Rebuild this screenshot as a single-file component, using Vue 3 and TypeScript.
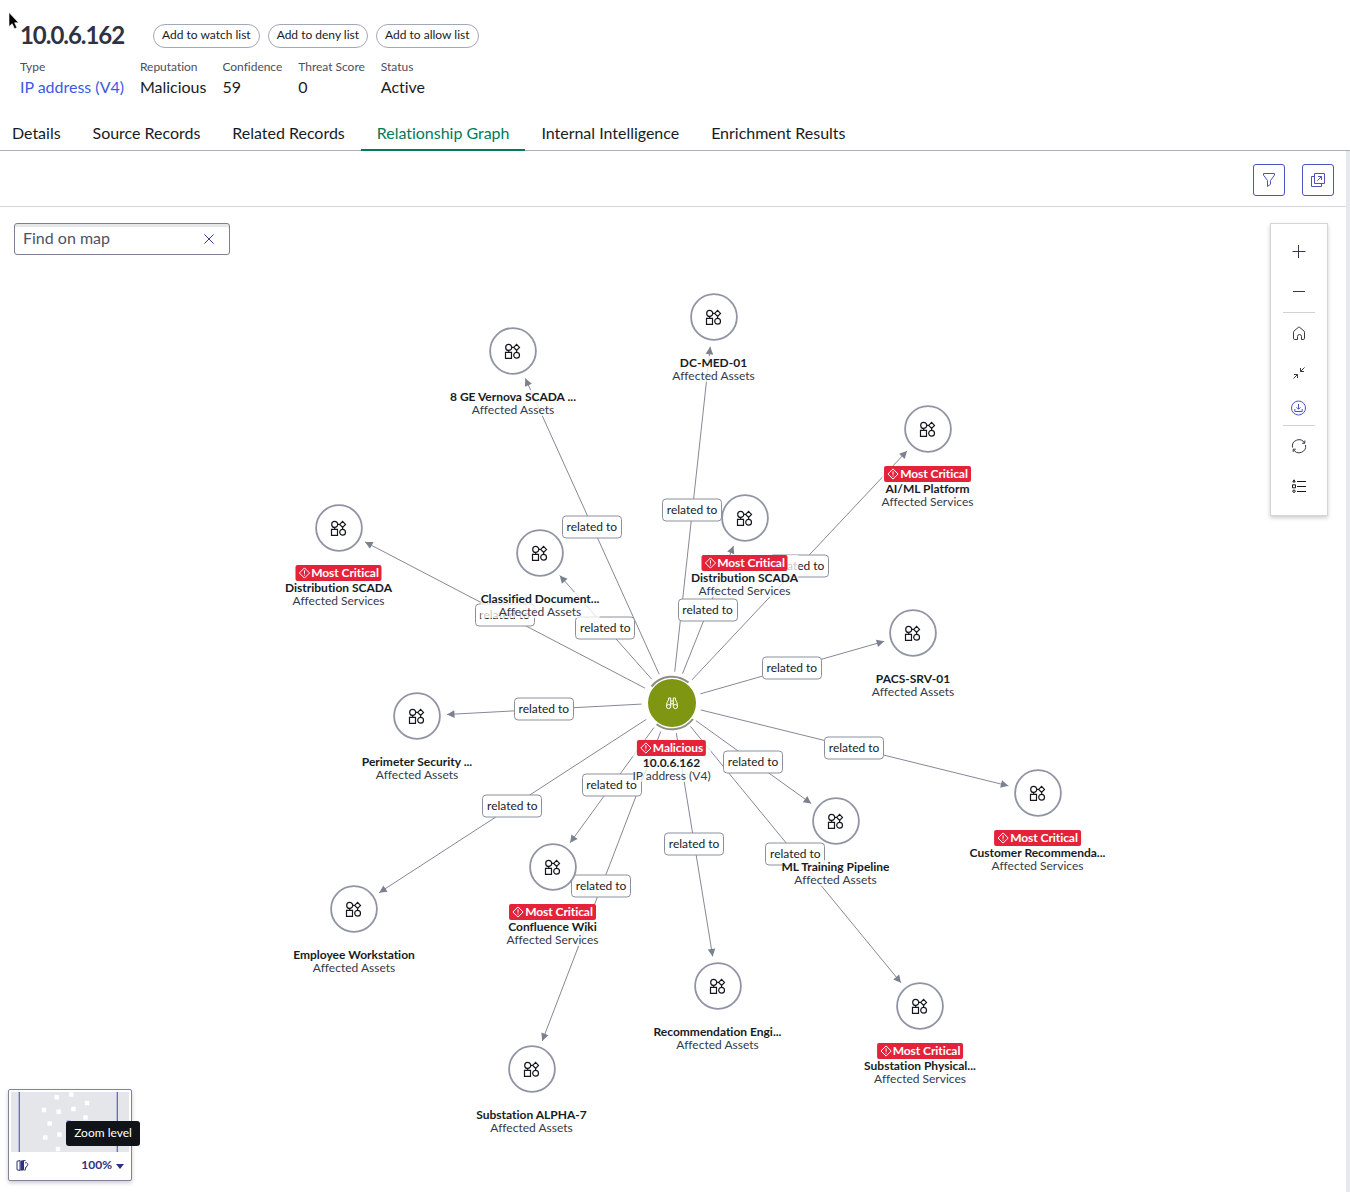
<template>
  <div class="page">
    <header class="record-header">
      <div class="title-row">
        <h1>10.0.6.162</h1>
        <button v-for="action in actions" :key="action" class="pill">{{ action }}</button>
      </div>
      <dl class="meta">
        <div v-for="field in fields" :key="field.label" class="field">
          <dt>{{ field.label }}</dt>
          <dd :class="{ link: field.link }">{{ field.value }}</dd>
        </div>
      </dl>
      <svg class="cursor" width="14" height="20" viewBox="0 0 14 20">
        <path d="M2 1.500v14l3.200-2.800 2.300 5 2.400-1-2.300-4.900h4z" fill="#000" stroke="#fff" stroke-width=".6" />
      </svg>
    </header>

    <nav class="tabs">
      <button
        v-for="tab in tabs"
        :key="tab"
        class="tab"
        :class="{ active: tab === activeTab }"
        @click="activeTab = tab"
      >{{ tab }}</button>
    </nav>

    <main class="panel">
      <div class="toolbar">
        <button class="icon-button">
          <svg width="16" height="16" viewBox="0 0 16 16">
            <path d="M2.500 1.500h11v1.600L9.500 8.500v3.700l-3 2.300v-6L2.500 3.100z" />
          </svg>
        </button>
        <button class="icon-button">
          <svg width="16" height="16" viewBox="0 0 16 16">
            <path d="M4.500 1.500h10v10h-10zM4.500 4.500h-3v10h10v-3M7.300 8.700l4-4M8 4.500h3.500V8" />
          </svg>
        </button>
      </div>

      <div class="canvas">
        <svg class="edges" width="1346" height="985" viewBox="0 207 1346 985">
          <g v-for="edge in edges" :key="edge.id">
            <line :x1="edge.x1" :y1="edge.y1" :x2="edge.x2" :y2="edge.y2" />
            <path d="M0 0l-7.500-3.800v7.600z" :transform="edge.arrow" />
          </g>
        </svg>
        <span
          v-for="edge in edges"
          :key="edge.id"
          class="edge-label"
          :style="{ left: edge.mx + 'px', top: edge.my - 207 + 'px' }"
        >related to</span>

        <div
          v-for="(node, i) in nodes"
          :key="i"
          class="node"
          :class="{ tagged: node.badge }"
          :style="{ left: node.x + 'px', top: node.y - 207 + 'px' }"
        >
          <svg v-if="node.root" class="ring" width="60" height="60" viewBox="-30 -30 60 60">
            <circle r="24" fill="#7f9612" />
            <path class="arc" d="M-20.500-16.500A26.300 26.300 0 0 1 16.500-20.500M-15.500 21.200A26.300 26.300 0 0 0 21 16" />
            <path
              class="glyph"
              d="M-1.300 3.300v-8.300h-2.200v2c-1.200 1.500-2 3.500-2 6.300M1.300 3.300v-8.300h2.200v2c1.200 1.500 2 3.500 2 6.300M-1.300-2h2.600M-1.300 .8h2.600"
            />
            <circle class="glyph" cx="-3.400" cy="3.500" r="2.100" />
            <circle class="glyph" cx="3.400" cy="3.500" r="2.100" />
          </svg>
          <svg v-else class="ring" width="60" height="60" viewBox="-30 -30 60 60">
            <circle r="22.900" fill="#fff" stroke="#9094a3" stroke-width="1.800" />
            <g class="asset" transform="translate(-.7 0)">
              <circle cx="-3.600" cy="-3.600" r="3" />
              <path d="M-.6-3.600h2M4.300-6.600l2.900 3-2.900 3-2.900-3zM-3.600-.6v2M-6.800 1.300h6v6h-6z" />
              <circle cx="4.300" cy="4.300" r="2.900" />
              <path d="M4.300-.6v2" />
            </g>
          </svg>
          <div class="caption">
            <span v-if="node.badge" class="badge">
              <svg width="12" height="12" viewBox="0 0 12 12">
                <path d="M6 .9L11.100 6 6 11.100.9 6zM6 3.300v3.400M6 7.600v1" />
              </svg>
              <span>{{ node.badge }}</span>
            </span>
            <strong>{{ node.name }}</strong>
            <span class="kind">{{ node.kind }}</span>
          </div>
        </div>

        <div class="search">
          <span>Find on map</span>
          <svg width="10" height="10" viewBox="0 0 10 10"><path d="M.4.4l9.200 9.200M9.600.4L.4 9.600" /></svg>
        </div>

        <aside class="controls">
          <svg v-for="tool in tools" :key="tool.name" :class="tool.name" width="16" height="16" viewBox="0 0 16 16">
            <path :d="tool.path" />
          </svg>
        </aside>

        <div class="minimap">
          <svg width="118" height="60" viewBox="11 1092 118 60">
            <rect x="11" y="1092" width="118" height="60" fill="#e5e6ea" />
            <rect v-for="(dot, i) in dots" :key="i" :x="dot[0] - 2.2" :y="dot[1] - 2.2" width="4.400" height="4.400" fill="#fff" />
            <rect x="66.500" y="1120" width="4" height="4" fill="#b7b3ee" />
            <path d="M18.500 1092v60M116.500 1092v60" stroke="#b9bbdf" />
            <path d="M19.500 1092v60M117.500 1092v60" stroke="#6d6abf" />
          </svg>
          <div class="minimap-bar">
            <svg width="13" height="11" viewBox="0 0 13 11">
              <path d="M1 1.200l3-.6v9.800l-3-.6zM8 .6h1.500M8 10.200l1.500-.4V7.500M9 3a1.800 1.800 0 1 1 2 3L9.500 8" fill="none" stroke="#30317e" />
              <path d="M4.500.7L8 0v10.200l-3.500.6z" fill="#30317e" />
            </svg>
            <span class="percent">100%</span>
            <i class="caret"></i>
          </div>
          <span class="tooltip">Zoom level</span>
        </div>
      </div>
    </main>
  </div>
</template>

<script setup lang="ts">
  import { computed, ref } from 'vue';

  interface GraphNode {
    x: number;
    y: number;
    name: string;
    kind: string;
    badge?: string;
    root?: boolean;
  }

  const actions = ['Add to watch list', 'Add to deny list', 'Add to allow list'];

  const fields = [
    { label: 'Type', value: 'IP address (V4)', link: true },
    { label: 'Reputation', value: 'Malicious' },
    { label: 'Confidence', value: '59' },
    { label: 'Threat Score', value: '0' },
    { label: 'Status', value: 'Active' }
  ];

  const tabs = [
    'Details',
    'Source Records',
    'Related Records',
    'Relationship Graph',
    'Internal Intelligence',
    'Enrichment Results'
  ];
  const activeTab = ref('Relationship Graph');

  const assets = 'Affected Assets';
  const services = 'Affected Services';
  const critical = 'Most Critical';

  const root: GraphNode = { x: 671.5, y: 703, name: '10.0.6.162', kind: 'IP address (V4)', badge: 'Malicious', root: true };

  const related: GraphNode[] = [
    { x: 513, y: 351, name: '8 GE Vernova SCADA ...', kind: assets },
    { x: 713.5, y: 317, name: 'DC-MED-01', kind: assets },
    { x: 927.5, y: 429, name: 'AI/ML Platform', kind: services, badge: critical },
    { x: 338.5, y: 528, name: 'Distribution SCADA', kind: services, badge: critical },
    { x: 540, y: 553, name: 'Classified Document...', kind: assets },
    { x: 744.5, y: 518, name: 'Distribution SCADA', kind: services, badge: critical },
    { x: 913, y: 633, name: 'PACS-SRV-01', kind: assets },
    { x: 417, y: 716, name: 'Perimeter Security ...', kind: assets },
    { x: 1037.5, y: 793, name: 'Customer Recommenda...', kind: services, badge: critical },
    { x: 835.5, y: 821, name: 'ML Training Pipeline', kind: assets },
    { x: 552.5, y: 867, name: 'Confluence Wiki', kind: services, badge: critical },
    { x: 354, y: 909, name: 'Employee Workstation', kind: assets },
    { x: 717.5, y: 986, name: 'Recommendation Engi...', kind: assets },
    { x: 920, y: 1006, name: 'Substation Physical...', kind: services, badge: critical },
    { x: 531.5, y: 1069, name: 'Substation ALPHA-7', kind: assets }
  ];

  const nodes = [...related, root];

  // lines stop short of both circles
  const gap = 31;

  const edges = computed(() =>
    related.map((node, id) => {
      const dx = node.x - root.x;
      const dy = node.y - root.y;
      const length = Math.hypot(dx, dy);
      const ux = dx / length;
      const uy = dy / length;
      const x2 = node.x - ux * (gap - 1);
      const y2 = node.y - uy * (gap - 1);
      return {
        id,
        x1: root.x + ux * (gap - 1),
        y1: root.y - 0.5 + uy * gap,
        x2,
        y2,
        mx: (node.x + root.x) / 2 - 0.4,
        my: (node.y + root.y) / 2 - 0.4,
        arrow: `translate(${x2} ${y2}) rotate(${(Math.atan2(dy, dx) * 180) / Math.PI})`
      };
    })
  );

  const tools = [
    { name: 'zoom-in', path: 'M1.500 8.500h13M7.500 2v13' },
    { name: 'zoom-out', path: 'M2 8.500h12' },
    { name: 'home', path: 'M2.500 7.200Q2.500 6.500 3 6L7.300 2.400q.7-.6 1.400 0L13 6q.5.500.5 1.200v6q0 1.300-1.300 1.300h-1.700v-3a2 2 0 0 0-4 0v3H3.800q-1.300 0-1.300-1.300z' },
    { name: 'fit', path: 'M2.500 14.500l4-4M3 10.500h3.500V14M13.500 3.500l-4 4M9.500 4v3.500H13' },
    { name: 'download', path: 'M7.500 1a7 7 0 1 0 0 14A7 7 0 1 0 7.500 1M7.500 4v5M5.500 7.300l2 2 2-2M3.800 9v2.500h7.400V9' },
    { name: 'refresh', path: 'M1.500 9.500A6.500 6.500 0 0 1 13.500 5M14.500 7A6.500 6.500 0 0 1 2.500 11.500M13.800 2.500v2.800h-2.600M2.200 14v-2.800h2.600' },
    { name: 'legend', path: 'M6 3.500h9M6 8.500h9M6 13.500h9M3 1.800L1.800 4h2.400zM1.500 6.800h3v3h-3zM3 12a1.200 1.200 0 1 0 0 2.400A1.200 1.200 0 1 0 3 12' }
  ];

  const dots = [
    [56.7, 1097.3], [71.3, 1094.5], [87, 1103], [44, 1110], [58.7, 1111.7], [73.5, 1109],
    [85.5, 1117.5], [49.7, 1123.5], [59.5, 1134.5], [45.3, 1137.5], [58, 1149]
  ];
</script>

<style>
  body {
    margin: 0;
    background: #fff;
  }
</style>

<style scoped>
  .page {
    display: flex;
    flex-direction: column;
    width: 1350px;
    height: 1192px;
    overflow: hidden;
    font-family: Lato, sans-serif;
    font-variant-ligatures: none;
    color: #181c24;
  }

  button {
    font-family: inherit;
    font-variant-ligatures: inherit;
    color: inherit;
    background: #fff;
    cursor: pointer;
  }

  .record-header {
    position: relative;
    box-sizing: border-box;
    height: 117px;
    padding: 24px 20px 0;
  }

  .title-row {
    display: flex;
    align-items: center;
    height: 24px;
  }

  h1 {
    width: 133px;
    margin: -2px 0 0;
    font-size: 24px;
    line-height: 24px;
    letter-spacing: -1.05px;
    color: #2e3342;
  }

  .pill {
    box-sizing: border-box;
    height: 24px;
    margin-right: 8px;
    padding: 0 8px 3px;
    border: 1px solid #a3a8b8;
    border-radius: 12px;
    font-size: 12px;
    white-space: nowrap;
  }

  .meta {
    display: flex;
    gap: 16px;
    margin: 11px 0 0;
    letter-spacing: -0.02px;
  }

  dt {
    font-size: 12px;
    line-height: 16px;
    color: #4a5060;
  }

  dd {
    margin: 0;
    font-size: 16px;
    line-height: 24px;
  }

  .link {
    color: #3c59e7;
  }

  .cursor {
    position: absolute;
    left: 7px;
    top: 11px;
  }

  .tabs {
    display: flex;
    box-sizing: border-box;
    height: 34px;
    border-bottom: 1px solid #adb0bc;
  }

  .tab {
    box-sizing: border-box;
    height: 34px;
    padding: 0 16px 3px;
    border: 0;
    font-size: 16px;
    letter-spacing: -0.02px;
    background: none;
    white-space: nowrap;
  }

  .tab:first-child {
    padding-left: 12px;
  }

  .tab.active {
    color: #007a5a;
    box-shadow: inset 0 -2px #007a5a;
  }

  .panel {
    flex: 1;
    display: flex;
    flex-direction: column;
    border-right: 4px solid #e6e8f0;
    box-shadow: 1px 0 #d0d3de;
  }

  .toolbar {
    display: flex;
    justify-content: flex-end;
    gap: 17px;
    box-sizing: border-box;
    height: 56px;
    padding: 13px 12px 0 0;
    border-bottom: 1px solid #d3d5de;
  }

  .icon-button {
    box-sizing: border-box;
    display: flex;
    align-items: center;
    justify-content: center;
    width: 32px;
    height: 32px;
    padding: 0;
    border: 1px solid #4f52bd;
    border-radius: 3px;
  }

  .icon-button svg {
    fill: none;
    stroke: #4f52bd;
  }

  .canvas {
    position: relative;
    flex: 1;
  }

  .edges {
    display: block;
  }

  .edges line {
    stroke: #858995;
  }

  .edges path {
    fill: #7c8190;
  }

  .edge-label {
    position: absolute;
    transform: translate(-50%, -50%);
    box-sizing: border-box;
    width: 60px;
    height: 23px;
    border: 1px solid #8b909f;
    border-radius: 4px;
    background: #fff;
    font-size: 12px;
    line-height: 19px;
    text-align: center;
    white-space: nowrap;
  }

  .node {
    position: absolute;
    width: 0;
    height: 0;
  }

  .ring {
    position: absolute;
    left: -30px;
    top: -30px;
  }

  .arc {
    fill: none;
    stroke: #8d8d88;
    stroke-width: 2;
  }

  .glyph {
    fill: none;
    stroke: #fff;
  }

  .asset {
    fill: none;
    stroke: #14171c;
    stroke-width: 1.2;
  }

  .caption {
    position: absolute;
    top: 39px;
    left: 0;
    transform: translateX(-50%);
    display: flex;
    flex-direction: column;
    align-items: center;
    background: rgba(255, 255, 255, 0.75);
    font-size: 12px;
    line-height: 13px;
    white-space: nowrap;
  }

  .tagged .caption {
    top: 37px;
  }

  .caption strong {
    font-weight: 700;
  }

  .kind {
    color: #343a48;
  }

  .badge {
    display: flex;
    align-items: center;
    gap: 1px;
    height: 16px;
    padding: 0 3px 0 3px;
    border-radius: 2px;
    background: #e4233b;
    color: #fff;
    font-weight: 700;
    letter-spacing: -0.07px;
  }

  .badge span {
    margin-top: -2px;
  }

  .badge svg {
    fill: none;
    stroke: #fff;
  }

  .search {
    position: absolute;
    left: 14px;
    top: 16px;
    box-sizing: border-box;
    display: flex;
    align-items: center;
    justify-content: space-between;
    width: 216px;
    height: 32px;
    padding: 0 15px 0 8px;
    border: 1px solid #7b8192;
    border-radius: 3px;
    background: #fff;
    box-shadow: inset 0 3px #e6e7e9;
    font-size: 16px;
    color: #4d5363;
  }

  .search span {
    margin-top: -3px;
  }

  .search svg {
    stroke: #3a3c96;
  }

  .controls {
    position: absolute;
    left: 1270px;
    top: 16px;
    box-sizing: border-box;
    display: flex;
    flex-direction: column;
    align-items: center;
    width: 58px;
    height: 293px;
    padding-top: 19px;
    border: 1px solid #d4d5dc;
    background: #fff;
    box-shadow: 0 2px 4px rgba(0, 0, 0, 0.2);
  }

  .controls svg {
    fill: none;
    stroke: #343a48;
    flex: none;
  }

  .controls .zoom-out {
    margin-top: 24px;
    padding: 0 8px 13px;
    border-bottom: 1px solid #d0d2da;
  }

  .controls .home {
    margin-top: 12px;
  }

  .controls .fit {
    margin-top: 23px;
  }

  .controls .download {
    margin-top: 20px;
    padding: 0 8px 9px;
    border-bottom: 1px solid #d0d2da;
    stroke: #4f52bd;
  }

  .controls .refresh {
    margin-top: 12px;
  }

  .controls .legend {
    margin-top: 24px;
    stroke: #14171c;
  }

  .minimap {
    position: absolute;
    left: 8px;
    top: 882px;
    box-sizing: border-box;
    width: 124px;
    height: 92px;
    padding: 2px;
    border: 1px solid #7f8497;
    border-radius: 2px;
    background: #fff;
    box-shadow: 0 2px 4px rgba(0, 0, 0, 0.2);
  }

  .minimap > svg {
    display: block;
  }

  .minimap-bar {
    display: flex;
    align-items: center;
    height: 26px;
    padding: 0 5px;
    color: #30317e;
  }

  .percent {
    margin: -2px 0 0 auto;
    font-size: 12px;
    font-weight: 700;
  }

  .caret {
    margin: 2px 0 0 4px;
    border: 4px solid transparent;
    border-top: 5px solid #30317e;
    border-bottom: 0;
  }

  .tooltip {
    position: absolute;
    left: 57px;
    top: 31px;
    width: 74px;
    height: 25px;
    border-radius: 3px;
    background: #101418;
    color: #fff;
    font-size: 12px;
    line-height: 24px;
    text-align: center;
  }
</style>
